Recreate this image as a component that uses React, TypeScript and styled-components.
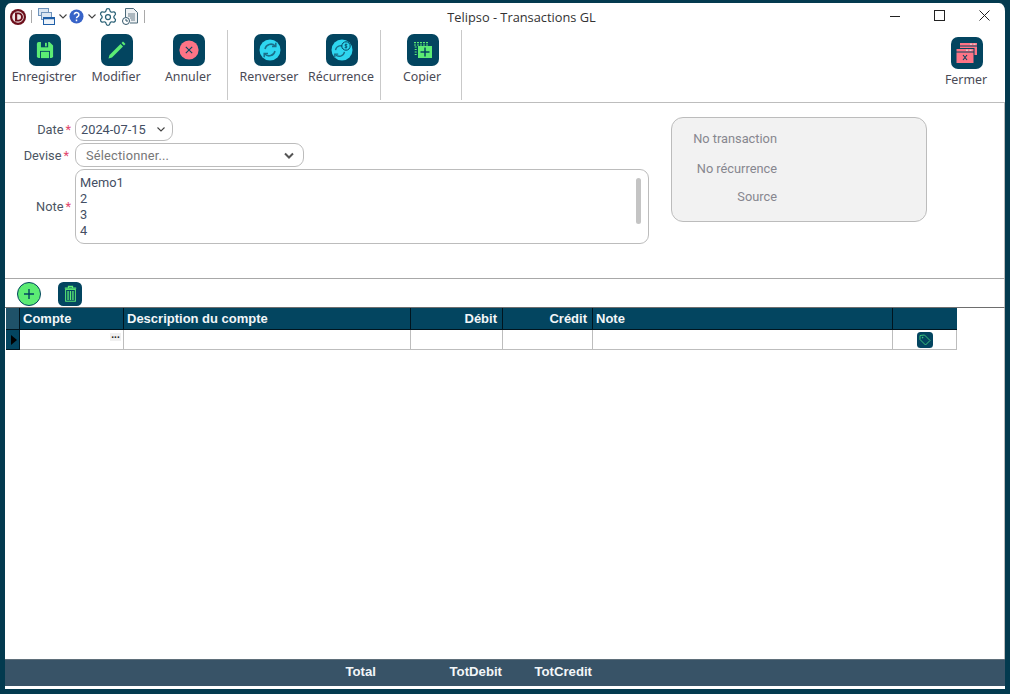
import React from 'react';
import styled, {createGlobalStyle} from 'styled-components';
import {Settings} from 'lucide-react';

const colors = {
    frame: '#033a4f',
    tile: '#034560',
    green: '#5cec74',
    pink: '#fd7486',
    cyan: '#2fd6f0',
    line: '#bdbdbd',
    footer: '#385367',
};

const columns = '14px 104px 287px 92px 90px 300px 64px';

const GlobalStyle = createGlobalStyle`
    html, body {
        margin: 0;
        padding: 0;
        background: ${colors.frame};
    }
    * {
        box-sizing: border-box;
    }
`;

const Win = styled.div`
    width: 1010px;
    height: 694px;
    display: flex;
    flex-direction: column;
    background: #fff;
    border: solid ${colors.frame};
    border-width: 3px 5px 5px 5px;
    border-radius: 11px 11px 4px 4px;
    overflow: hidden;
`;

const TitleBar = styled.div`
    height: 27px;
    flex: none;
    display: flex;
    align-items: center;
`;

const QuickAccess = styled.div`
    width: 166px;
    padding-left: 5px;
    display: flex;
    align-items: center;
`;

const QuickIcon = styled.svg<{$left?: number; $right?: number}>`
    flex: none;
    display: block;
    margin-left: ${p => p.$left ?? 0}px;
    margin-right: ${p => p.$right ?? 0}px;
`;

const GearIcon = styled(Settings)`
    flex: none;
    display: block;
    margin-left: 1px;
    margin-right: -1px;
`;

const QuickSep = styled.span<{$left: number}>`
    width: 1px;
    height: 13px;
    flex: none;
    margin-left: ${p => p.$left}px;
    background: #a9a9a9;
`;

const Title = styled.div`
    flex: 1;
    text-align: center;
    font: 12.8px "Open Sans", sans-serif;
    color: #333;
`;

const WinControls = styled.div`
    display: flex;
    margin-right: -2px;
`;

const WinControl = styled.div`
    width: 45px;
    height: 27px;
    display: flex;
    align-items: center;
    justify-content: center;
    padding-bottom: 2px;
`;

const Ribbon = styled.div`
    height: 73px;
    flex: none;
    display: flex;
    padding-left: 1px;
    border-bottom: 1px solid ${colors.line};
`;

const RibbonGroup = styled.div<{$first?: boolean}>`
    height: 70px;
    display: flex;
    padding: 0 3px 0 ${p => (p.$first ? 2 : 5)}px;
    border-right: 1px solid #c9c9c9;
`;

const RibbonButton = styled.div<{$end?: boolean}>`
    width: 72px;
    display: flex;
    flex-direction: column;
    align-items: center;
    padding: 4px 0 0 ${p => (p.$end ? 0 : 2)}px;
    font: 12.4px "Noto Sans", sans-serif;
    color: #4a4a55;
    white-space: nowrap;
`;

const RibbonEnd = styled.div`
    margin-left: auto;
    margin-right: 2px;
    padding-top: 3px;
`;

const Tile = styled.div<{$size?: number}>`
    width: ${p => p.$size ?? 32}px;
    height: ${p => p.$size ?? 32}px;
    flex: none;
    display: flex;
    align-items: center;
    justify-content: center;
    border-radius: ${p => (p.$size ? p.$size / 4.5 : 7)}px;
    background: ${colors.tile};
`;

const ButtonLabel = styled.span`
    margin: 2px 2px 0 0;
    line-height: 17px;
`;

const FormArea = styled.div`
    height: 176px;
    flex: none;
    display: flex;
    padding-top: 14px;
    border-bottom: 1px solid #a8a8a8;
    border-right: 1px solid ${colors.line};
`;

const FormFields = styled.div`
    width: 644px;
    display: flex;
    flex-direction: column;
    gap: 2px;
`;

const FieldRow = styled.div`
    display: flex;
    align-items: center;
`;

const FieldLabel = styled.div<{$pad: number}>`
    width: 70px;
    padding-right: ${p => p.$pad}px;
    text-align: right;
    font: 12.8px Roboto, sans-serif;
    color: #4b5563;
    span {
        margin-left: 2px;
        color: #e2476b;
    }
`;

const Field = styled.div<{$width: number; $height?: number}>`
    position: relative;
    width: ${p => p.$width}px;
    height: ${p => p.$height ?? 24}px;
    display: flex;
    align-items: center;
    justify-content: space-between;
    border: 1px solid #bcbcbc;
    border-radius: 9px;
    font: 12.8px Roboto, sans-serif;
    color: #434e63;
`;

const DateValue = styled.span`
    padding-left: 5px;
`;

const Placeholder = styled.span`
    padding: 1px 0 0 10px;
    letter-spacing: .2px;
    color: #777;
`;

const NoteText = styled.div`
    align-self: flex-start;
    padding: 5px 0 0 4px;
    line-height: 16px;
`;

const NoteScroll = styled.div`
    position: absolute;
    right: 7px;
    top: 8px;
    width: 5px;
    height: 46px;
    border-radius: 3px;
    background: #c4c4c4;
`;

const InfoPanel = styled.div`
    width: 256px;
    height: 105px;
    margin-left: 22px;
    padding-top: 13px;
    display: flex;
    flex-direction: column;
    border: 1px solid #bcbcbc;
    border-radius: 12px;
    background: #f2f2f2;
`;

const InfoLabel = styled.div<{$gap: number}>`
    width: 105px;
    margin-top: ${p => p.$gap}px;
    text-align: right;
    font: 12.8px Roboto, sans-serif;
    line-height: 16px;
    color: #87878f;
`;

const GridTools = styled.div`
    height: 28px;
    flex: none;
    display: flex;
    align-items: center;
    gap: 17px;
    padding: 1px 0 0 12px;
    border-right: 1px solid ${colors.line};
`;

const AddButton = styled.div`
    width: 24px;
    height: 24px;
    display: flex;
    align-items: center;
    justify-content: center;
    border-radius: 50%;
    border: 1px solid ${colors.tile};
    background: ${colors.green};
`;

const GridArea = styled.div`
    flex: 1;
    padding-left: 1px;
    border-top: 1px solid #6e6e6e;
    border-right: 1px solid ${colors.line};
    border-left: 1px solid #d0d0d0;
    margin-left: -1px;
`;

const GridRow = styled.div`
    display: grid;
    grid-template-columns: ${columns};
    width: 951px;
`;

const HeadCell = styled.div<{$right?: boolean}>`
    height: 22px;
    padding: 0 ${p => (p.$right ? 5 : 3)}px 0 ${p => (p.$right ? 0 : 3)}px;
    text-align: ${p => (p.$right ? 'right' : 'left')};
    font: bold 13px/22px "Liberation Sans", sans-serif;
    color: #f2f6f8;
    background: ${colors.tile};
    border-right: 1px solid #00151f;
    border-bottom: 1px solid #00151f;
    &:last-child {
        border-right: none;
    }
`;

const CornerCell = styled(HeadCell)`
    background: #1f5269;
`;

const BodyCell = styled.div`
    position: relative;
    height: 20px;
    display: flex;
    align-items: center;
    justify-content: center;
    border-right: 1px solid ${colors.line};
    border-bottom: 1px solid ${colors.line};
`;

const RowMarker = styled(BodyCell)`
    justify-content: flex-start;
    padding-left: 5px;
    background: ${colors.tile};
    border-right: 1px solid #00151f;
    border-bottom: 1px solid #00151f;
`;

const Triangle = styled.div`
    width: 0;
    height: 0;
    border-top: 5px solid transparent;
    border-bottom: 5px solid transparent;
    border-left: 6px solid #000;
`;

const LookupButton = styled.div`
    position: absolute;
    top: 3px;
    right: 2px;
    width: 11px;
    height: 8px;
    background: #f0f0f0;
    font: bold 10px/4px "Liberation Sans", sans-serif;
    color: #222;
    text-align: center;
`;

const Footer = styled.div`
    height: 27px;
    flex: none;
    margin-bottom: 3px;
    background: ${colors.footer};
    border-top: 1px solid #5f6f7a;
`;

const FooterCell = styled.div<{$pad?: number}>`
    padding-right: ${p => p.$pad ?? 0}px;
    text-align: right;
    font: bold 13.2px/24px "Liberation Sans", sans-serif;
    color: #f2f6f8;
`;

const Chevron = ({x = 0, right = 0}: {x?: number; right?: number}) => (
    <QuickIcon $left={x} $right={right} width="10" height="7" viewBox="0 0 10 7">
        <path d="M1.500 1.500 5 5 8.500 1.500" fill="none" stroke="#444" strokeWidth="1.100"/>
    </QuickIcon>
);

const SaveIcon = () => (
    <svg width="18" height="18" viewBox="0 0 20 20">
        <path d="M1 3a2 2 0 0 1 2-2h12l4 4v12a2 2 0 0 1-2 2H3a2 2 0 0 1-2-2z" fill={colors.green}/>
        <rect x="5.500" y="1" width="8" height="6" fill={colors.tile}/>
        <rect x="10" y="2" width="2" height="4" fill={colors.green}/>
        <rect x="4.500" y="11" width="11" height="8" fill={colors.tile}/>
        <rect x="5.500" y="12" width="9" height="7" fill={colors.green}/>
    </svg>
);

const PencilIcon = () => (
    <svg width="20" height="20" viewBox="0 0 20 20">
        <path d="M1.500 18.500 2.500 15 13.500 4 16 6.500 5 17.500z" fill={colors.green}/>
        <path d="M14.500 3 16 1.500 18.500 4 17 5.500z" fill={colors.green}/>
    </svg>
);

const CancelIcon = () => (
    <svg width="20" height="20" viewBox="0 0 20 20">
        <circle cx="10" cy="10" r="9.600" fill={colors.pink}/>
        <path d="M6.800 6.800 13.200 13.200M13.200 6.800 6.800 13.200" stroke={colors.tile} strokeWidth="1.100"/>
    </svg>
);

const Arrows = () => (
    <g fill="none" stroke="#1a6f8a" strokeWidth="1.500">
        <path d="M5 9a6 6 0 0 1 10.200-3"/>
        <path d="M15 11a6 6 0 0 1-10.200 3"/>
        <path d="M15.800 2.800v3.800H12M4.200 17.200v-3.800H8"/>
    </g>
);

const ReverseIcon = () => (
    <svg width="22" height="22" viewBox="0 0 22 22">
        <circle cx="11" cy="11" r="10.500" fill={colors.cyan}/>
        <g transform="translate(1 1)"><Arrows/></g>
    </svg>
);

const RecurrenceIcon = () => (
    <svg width="22" height="22" viewBox="0 0 22 22">
        <circle cx="11" cy="11" r="10.500" fill={colors.cyan}/>
        <g transform="translate(0 3) scale(.9)"><Arrows/></g>
        <circle cx="15" cy="7" r="4.200" fill={colors.cyan} stroke={colors.tile}/>
        <path d="M16.400 5.400h-2.200v1.600h1.600v1.600h-2.200M15 4.600v5" fill="none" stroke={colors.tile} strokeWidth=".7"/>
    </svg>
);

const CopyIcon = () => (
    <svg width="18" height="16" viewBox="0 0 18 16">
        <path d="M0 .7h14M0 3h14M.7 5h2M.7 7.500h2M.7 10h2M.7 12.500h2" stroke={colors.green} strokeWidth="1.200" strokeDasharray="2 1"/>
        <rect x="4" y="4" width="14" height="12" fill={colors.green}/>
        <path d="M11 5.500v9M6.500 10h9" stroke={colors.tile} strokeWidth="1.500"/>
    </svg>
);

const CloseAllIcon = () => (
    <svg width="24" height="22" viewBox="0 0 24 22">
        <rect x="4.500" y=".5" width="18" height="13" fill={colors.pink} stroke={colors.tile}/>
        <path d="M4.500 4h18" stroke={colors.tile}/>
        <rect x="1" y="6.500" width="18" height="15" fill={colors.pink} stroke={colors.tile}/>
        <path d="M1 10h18" stroke={colors.tile}/>
        <path d="M15 2.200h2M18.500 2.200h2M11 8.200h2M14.500 8.200h2" stroke="#e5e5e5"/>
        <path d="M8 13 12 18M12 13 8 18" stroke={colors.tile} strokeWidth="1.100"/>
    </svg>
);

const TrashIcon = () => (
    <svg width="13" height="17" viewBox="0 0 16 20">
        <path d="M1 3.500h14M5.500 3V1.200h5V3" fill="none" stroke={colors.green} strokeWidth="1.500"/>
        <rect x="2" y="5" width="12" height="14.500" fill="none" stroke={colors.green} strokeWidth="1.200"/>
        <path d="M5 7v11M8 7v11M11 7v11" stroke={colors.green} strokeWidth="1.600"/>
    </svg>
);

const TagIcon = () => (
    <svg width="12" height="12" viewBox="0 0 12 12">
        <path d="M1 1.500 5.500 1 11 6.500 6.500 11 1 5.500z" fill="none" stroke="#3fcf7c" strokeWidth=".9" strokeLinejoin="round"/>
        <circle cx="3.600" cy="3.600" r=".8" fill="#3fcf7c"/>
    </svg>
);

export default function App() {
    return (
        <>
            <GlobalStyle/>
            <Win>
                <TitleBar>
                    <QuickAccess>
                        <QuickIcon width="16" height="16" viewBox="0 0 16 16">
                            <circle cx="8" cy="8" r="8" fill="#6d0f1c"/>
                            <circle cx="8" cy="8" r="5.800" fill="#f1e6e6"/>
                            <path d="M5 3.500h3.500a4.500 4.500 0 0 1 0 9H5zM7.200 5.300v5.400h1.100a2.700 2.700 0 0 0 0-5.400z" fill="#6d0f1c" fillRule="evenodd"/>
                        </QuickIcon>
                        <QuickSep $left={5}/>
                        <QuickIcon $left={6} width="17" height="17" viewBox="0 0 17 17">
                            <rect x=".5" y=".5" width="10" height="7" fill="#dbe6f2" stroke="#6f93bb"/>
                            <rect x="3.500" y="4.500" width="10" height="7" fill="#dbe6f2" stroke="#6f93bb"/>
                            <rect x="5.500" y="9.500" width="11" height="7" fill="#eef3f9" stroke="#1f5fa8"/>
                            <path d="M6 10.500h10" stroke="#1f5fa8" strokeWidth="1.500"/>
                        </QuickIcon>
                        <Chevron x={3}/>
                        <QuickIcon $left={1} width="15" height="15" viewBox="0 0 15 15">
                            <circle cx="7.500" cy="7.500" r="7" fill="#3763c8"/>
                            <path d="M5.300 5.600a2.300 2.200 0 1 1 3.400 2c-.8.500-1.200.8-1.200 1.700M7.500 10.500v1.700" fill="none" stroke="#fff" strokeWidth="1.500"/>
                        </QuickIcon>
                        <Chevron x={3}/>
                        <GearIcon size={20} strokeWidth={1.5} color="#2a6176"/>
                        <QuickIcon $left={5} width="16" height="17" viewBox="0 0 16 17">
                            <path d="M3.500 9V.5h8l4 4V15H8" fill="#eef1f3" stroke="#4d6a7a"/>
                            <path d="M6 6h7M6 8h7M8 10h5M9 12h4" stroke="#6a7f8b"/>
                            <circle cx="4" cy="13" r="3.500" fill="#fff" stroke="#33566a"/>
                            <path d="M4 11v2h2" fill="none" stroke="#33566a"/>
                        </QuickIcon>
                        <QuickSep $left={6}/>
                    </QuickAccess>
                    <Title>Telipso - Transactions GL</Title>
                    <WinControls>
                        <WinControl>
                            <svg width="10" height="10" viewBox="0 0 10 10"><path d="M0 5.500h10" stroke="#222"/></svg>
                        </WinControl>
                        <WinControl>
                            <svg width="11" height="11" viewBox="0 0 11 11"><rect x=".5" y=".5" width="10" height="10" fill="none" stroke="#222"/></svg>
                        </WinControl>
                        <WinControl>
                            <svg width="11" height="11" viewBox="0 0 11 11"><path d="M.5.500l10 10M10.500.500l-10 10" stroke="#222"/></svg>
                        </WinControl>
                    </WinControls>
                </TitleBar>

                <Ribbon>
                    <RibbonGroup $first>
                        <RibbonButton><Tile><SaveIcon/></Tile><ButtonLabel>Enregistrer</ButtonLabel></RibbonButton>
                        <RibbonButton><Tile><PencilIcon/></Tile><ButtonLabel>Modifier</ButtonLabel></RibbonButton>
                        <RibbonButton><Tile><CancelIcon/></Tile><ButtonLabel>Annuler</ButtonLabel></RibbonButton>
                    </RibbonGroup>
                    <RibbonGroup>
                        <RibbonButton><Tile><ReverseIcon/></Tile><ButtonLabel>Renverser</ButtonLabel></RibbonButton>
                        <RibbonButton><Tile><RecurrenceIcon/></Tile><ButtonLabel>Récurrence</ButtonLabel></RibbonButton>
                    </RibbonGroup>
                    <RibbonGroup>
                        <RibbonButton><Tile><CopyIcon/></Tile><ButtonLabel>Copier</ButtonLabel></RibbonButton>
                    </RibbonGroup>
                    <RibbonEnd>
                        <RibbonButton $end><Tile><CloseAllIcon/></Tile><ButtonLabel>Fermer</ButtonLabel></RibbonButton>
                    </RibbonEnd>
                </Ribbon>

                <FormArea>
                    <FormFields>
                        <FieldRow>
                            <FieldLabel $pad={4}>Date<span>*</span></FieldLabel>
                            <Field $width={98}>
                                <DateValue>2024-07-15</DateValue>
                                <Chevron right={6}/>
                            </Field>
                        </FieldRow>
                        <FieldRow>
                            <FieldLabel $pad={6}>Devise<span>*</span></FieldLabel>
                            <Field $width={229}>
                                <Placeholder>Sélectionner...</Placeholder>
                                <QuickIcon $right={9} width="10" height="7" viewBox="0 0 10 7">
                                    <path d="M1 1.500 5 5.500 9 1.500" fill="none" stroke="#555" strokeWidth="2"/>
                                </QuickIcon>
                            </Field>
                        </FieldRow>
                        <FieldRow>
                            <FieldLabel $pad={4}>Note<span>*</span></FieldLabel>
                            <Field $width={574} $height={75}>
                                <NoteText>Memo1<br/>2<br/>3<br/>4</NoteText>
                                <NoteScroll/>
                            </Field>
                        </FieldRow>
                    </FormFields>
                    <InfoPanel>
                        <InfoLabel $gap={0}>No transaction</InfoLabel>
                        <InfoLabel $gap={14}>No récurrence</InfoLabel>
                        <InfoLabel $gap={12}>Source</InfoLabel>
                    </InfoPanel>
                </FormArea>

                <GridTools>
                    <AddButton>
                        <svg width="10" height="10" viewBox="0 0 10 10"><path d="M5 0v10M0 5h10" stroke={colors.tile} strokeWidth="1.400"/></svg>
                    </AddButton>
                    <Tile $size={24}><TrashIcon/></Tile>
                </GridTools>

                <GridArea>
                    <GridRow>
                        <CornerCell/>
                        <HeadCell>Compte</HeadCell>
                        <HeadCell>Description du compte</HeadCell>
                        <HeadCell $right>Débit</HeadCell>
                        <HeadCell $right>Crédit</HeadCell>
                        <HeadCell>Note</HeadCell>
                        <HeadCell/>
                    </GridRow>
                    <GridRow>
                        <RowMarker><Triangle/></RowMarker>
                        <BodyCell><LookupButton>...</LookupButton></BodyCell>
                        <BodyCell/>
                        <BodyCell/>
                        <BodyCell/>
                        <BodyCell/>
                        <BodyCell><Tile $size={16}><TagIcon/></Tile></BodyCell>
                    </GridRow>
                </GridArea>

                <Footer>
                    <GridRow>
                        <span/>
                        <span/>
                        <FooterCell $pad={34}>Total</FooterCell>
                        <FooterCell>TotDebit</FooterCell>
                        <FooterCell>TotCredit</FooterCell>
                    </GridRow>
                </Footer>
            </Win>
        </>
    );
}
